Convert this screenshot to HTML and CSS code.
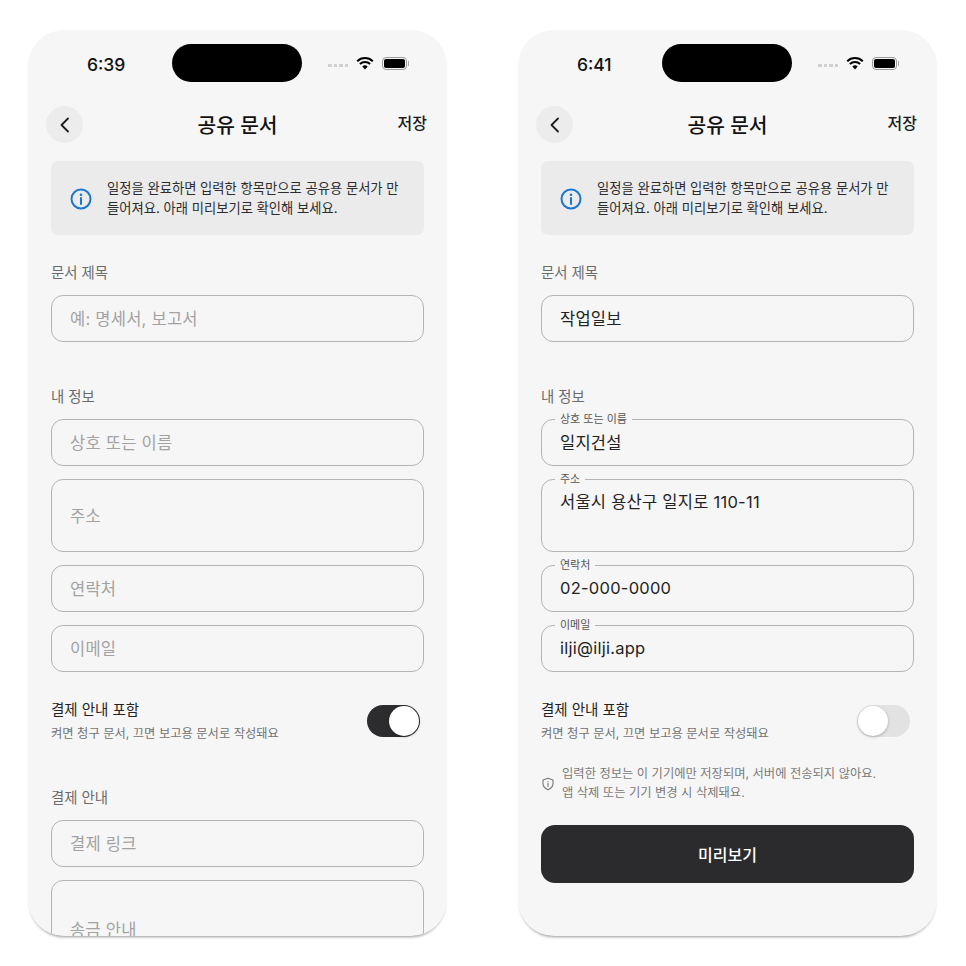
FILE: index.html
```html
<!DOCTYPE html>
<html lang="ko">
<head>
    <meta charset="UTF-8">
    <meta name="viewport" content="width=device-width, initial-scale=1.0">
    <title>공유 문서</title>
    <link rel="stylesheet" href="styles.css">
</head>
<body>
    <!-- Empty form -->
    <div class="phone">
        <div class="status-bar">
            <span class="time">6:39</span>
            <div class="island"></div>
            <div class="status-icons">
                <div class="signal"><i></i><i></i><i></i><i></i></div>
                <svg class="wifi" width="18" height="14" viewBox="0 0 18 14"><path d="M1.2 5.2a11.2 11.2 0 0 1 15.6 0M3.9 8a7.4 7.4 0 0 1 10.2 0" fill="none" stroke="#000" stroke-width="2"/><path d="M9 13.4 6.3 10.5a3.9 3.9 0 0 1 5.4 0z" fill="#000"/></svg>
                <div class="battery"><div class="battery-fill"></div></div>
            </div>
        </div>

        <div class="nav">
            <button class="back-btn">
                <svg width="12" height="16" viewBox="0 0 12 16"><path d="M9 1.5 2.5 8 9 14.5" fill="none" stroke="#1c1c1e" stroke-width="1.8" stroke-linecap="round" stroke-linejoin="round"/></svg>
            </button>
            <h1>공유 문서</h1>
            <span class="save">저장</span>
        </div>

        <div class="content">
            <div class="info-box">
                <svg class="info-icon" width="22" height="22" viewBox="0 0 22 22"><circle cx="11" cy="11" r="9.5" fill="none" stroke="#1b76cf" stroke-width="2"/><path d="M11 10v6" stroke="#1b76cf" stroke-width="2" stroke-linecap="round"/><circle cx="11" cy="6.8" r="1.3" fill="#1b76cf"/></svg>
                <p>일정을 완료하면 입력한 항목만으로 공유용 문서가 만들어져요. 아래 미리보기로 확인해 보세요.</p>
            </div>

            <div class="section-label first">문서 제목</div>
            <div class="field placeholder">예: 명세서, 보고서</div>

            <div class="section-label">내 정보</div>
            <div class="fields">
                <div class="field placeholder">상호 또는 이름</div>
                <div class="field tall placeholder">주소</div>
                <div class="field placeholder">연락처</div>
                <div class="field placeholder">이메일</div>
            </div>

            <div class="toggle-row">
                <div>
                    <div class="toggle-title">결제 안내 포함</div>
                    <div class="toggle-sub">켜면 청구 문서, 끄면 보고용 문서로 작성돼요</div>
                </div>
                <div class="toggle on"><div class="knob"></div></div>
            </div>

            <div class="section-label">결제 안내</div>
            <div class="fields">
                <div class="field placeholder">결제 링크</div>
                <div class="field taller placeholder">송금 안내</div>
            </div>
        </div>
    </div>

    <!-- Filled form -->
    <div class="phone">
        <div class="status-bar">
            <span class="time">6:41</span>
            <div class="island"></div>
            <div class="status-icons">
                <div class="signal"><i></i><i></i><i></i><i></i></div>
                <svg class="wifi" width="18" height="14" viewBox="0 0 18 14"><path d="M1.2 5.2a11.2 11.2 0 0 1 15.6 0M3.9 8a7.4 7.4 0 0 1 10.2 0" fill="none" stroke="#000" stroke-width="2"/><path d="M9 13.4 6.3 10.5a3.9 3.9 0 0 1 5.4 0z" fill="#000"/></svg>
                <div class="battery"><div class="battery-fill"></div></div>
            </div>
        </div>

        <div class="nav">
            <button class="back-btn">
                <svg width="12" height="16" viewBox="0 0 12 16"><path d="M9 1.5 2.5 8 9 14.5" fill="none" stroke="#1c1c1e" stroke-width="1.8" stroke-linecap="round" stroke-linejoin="round"/></svg>
            </button>
            <h1>공유 문서</h1>
            <span class="save">저장</span>
        </div>

        <div class="content">
            <div class="info-box">
                <svg class="info-icon" width="22" height="22" viewBox="0 0 22 22"><circle cx="11" cy="11" r="9.5" fill="none" stroke="#1b76cf" stroke-width="2"/><path d="M11 10v6" stroke="#1b76cf" stroke-width="2" stroke-linecap="round"/><circle cx="11" cy="6.8" r="1.3" fill="#1b76cf"/></svg>
                <p>일정을 완료하면 입력한 항목만으로 공유용 문서가 만들어져요. 아래 미리보기로 확인해 보세요.</p>
            </div>

            <div class="section-label first">문서 제목</div>
            <div class="field">작업일보</div>

            <div class="section-label">내 정보</div>
            <div class="fields">
                <div class="field"><span class="float-label">상호 또는 이름</span>일지건설</div>
                <div class="field tall top"><span class="float-label">주소</span>서울시 용산구 일지로 110-11</div>
                <div class="field"><span class="float-label">연락처</span>02-000-0000</div>
                <div class="field"><span class="float-label">이메일</span>ilji@ilji.app</div>
            </div>

            <div class="toggle-row">
                <div>
                    <div class="toggle-title">결제 안내 포함</div>
                    <div class="toggle-sub">켜면 청구 문서, 끄면 보고용 문서로 작성돼요</div>
                </div>
                <div class="toggle"><div class="knob"></div></div>
            </div>

            <div class="note">
                <svg width="14" height="14" viewBox="0 0 14 14"><path d="M7 1.2 12 3v3.6c0 3-2.1 5-5 6.2-2.9-1.2-5-3.2-5-6.2V3z" fill="none" stroke="#777" stroke-width="1.1" stroke-linejoin="round"/><path d="M7 6.4v3" stroke="#777" stroke-width="1.1" stroke-linecap="round"/><circle cx="7" cy="4.6" r=".7" fill="#777"/></svg>
                <p>입력한 정보는 이 기기에만 저장되며, 서버에 전송되지 않아요.<br>앱 삭제 또는 기기 변경 시 삭제돼요.</p>
            </div>

            <button class="preview-btn">미리보기</button>
        </div>
    </div>
</body>
</html>
```

FILE: styles.css
```css
* {
    margin: 0;
    padding: 0;
    box-sizing: border-box;
    font-family: Inter, 'Noto Sans CJK KR', sans-serif;
}

body {
    background: #fff;
    display: flex;
    gap: 71px;
    padding: 30px 28px;
}

.phone {
    width: 419px;
    height: 906px;
    flex-shrink: 0;
    background: #f6f6f6;
    border-radius: 36px;
    overflow: hidden;
    box-shadow: 0 3px 3px -2px rgba(0, 0, 0, 0.4);
}

/* status bar */
.status-bar {
    display: grid;
    grid-template-columns: 144px 130px 1fr;
    align-items: center;
    padding-top: 14px;
}

.time {
    padding-left: 59px;
    padding-top: 2px;
    font-size: 17.5px;
    font-weight: 500;
    color: #111;
}

.island {
    height: 38px;
    background: #000;
    border-radius: 19px;
}

.status-icons {
    display: flex;
    align-items: center;
    padding-left: 26px;
}

.signal {
    display: flex;
    gap: 2px;
    margin-top: 5px;
    margin-right: 8px;
}

.signal i {
    width: 3.5px;
    height: 3.5px;
    background: #d0d0d0;
}

.wifi {
    margin-right: 8px;
}

.battery {
    position: relative;
    width: 25px;
    height: 13px;
    border: 1px solid #999;
    border-radius: 4px;
    padding: 1px;
}

.battery::after {
    content: '';
    position: absolute;
    right: -3px;
    top: 3px;
    width: 1px;
    height: 5px;
    background: #aaa;
}

.battery-fill {
    height: 100%;
    background: #000;
    border-radius: 2px;
}

/* nav */
.nav {
    display: flex;
    align-items: center;
    justify-content: space-between;
    position: relative;
    margin-top: 24px;
    padding: 0 20px 0 18px;
}

.back-btn {
    width: 37px;
    height: 37px;
    border: none;
    border-radius: 50%;
    background: #ececec;
    display: flex;
    align-items: center;
    justify-content: center;
}

h1 {
    position: absolute;
    left: 0;
    right: 0;
    margin-top: -2px;
    text-align: center;
    font-size: 20.3px;
    font-weight: 500;
    color: #111;
}

.save {
    margin-top: -5px;
    font-size: 16px;
    font-weight: 500;
    color: #1c1c1e;
}

/* content */
.content {
    padding: 18px 23px 0;
}

.info-box {
    display: flex;
    align-items: center;
    gap: 15px;
    height: 74px;
    padding: 0 20px 0 19px;
    background: #ebebeb;
    border-radius: 7px;
}

.info-icon {
    flex-shrink: 0;
    margin-top: 2px;
}

.info-box p {
    font-size: 13.3px;
    line-height: 20px;
    color: #2c2c2e;
    word-break: break-all;
}

.section-label {
    margin-top: 45px;
    margin-bottom: 12px;
    font-size: 14.4px;
    line-height: 20px;
    color: #6b6b6b;
}

.section-label.first {
    margin-top: 28px;
}

.fields {
    display: flex;
    flex-direction: column;
    gap: 13px;
}

.field {
    position: relative;
    display: flex;
    align-items: center;
    height: 47px;
    flex-shrink: 0;
    padding: 0 18px 1px;
    border: 1px solid #b4b4b4;
    border-radius: 12px;
    font-size: 16.5px;
    letter-spacing: 0.25px;
    color: #232323;
}

.field.tall {
    height: 73px;
}

.field.taller {
    height: 98px;
}

.field.top {
    align-items: flex-start;
    padding-top: 9px;
}

.field.placeholder {
    color: #a2a2a2;
}

.float-label {
    position: absolute;
    left: 13px;
    top: -8px;
    padding: 0 5px;
    background: #f6f6f6;
    font-size: 11px;
    line-height: 14px;
    letter-spacing: 0;
    color: #555;
}

/* toggle */
.toggle-row {
    display: flex;
    align-items: center;
    justify-content: space-between;
    margin-top: 28px;
    padding-right: 4px;
}

.toggle-title {
    font-size: 14.5px;
    line-height: 20px;
    font-weight: 400;
    color: #232323;
}

.toggle-sub {
    margin-top: 5px;
    font-size: 12.3px;
    line-height: 18px;
    color: #737373;
}

.toggle {
    display: flex;
    width: 53px;
    height: 32px;
    margin-top: -1px;
    padding: 1px;
    border-radius: 16px;
    background: #e2e2e2;
}

.toggle.on {
    justify-content: flex-end;
    background: #2c2c2e;
}

.knob {
    width: 30px;
    height: 30px;
    border-radius: 50%;
    background: #fff;
    box-shadow: 0 1px 3px rgba(0, 0, 0, 0.25);
}

/* bottom note + button */
.note {
    display: flex;
    align-items: center;
    gap: 7px;
    margin-top: 22px;
}

.note p {
    font-size: 12.3px;
    line-height: 18.5px;
    color: #7a7a7a;
}

.preview-btn {
    display: block;
    width: 100%;
    height: 58px;
    margin-top: 23px;
    border: none;
    border-radius: 14px;
    background: #2b2b2d;
    color: #fff;
    font-size: 16px;
    font-weight: 500;
}
```
